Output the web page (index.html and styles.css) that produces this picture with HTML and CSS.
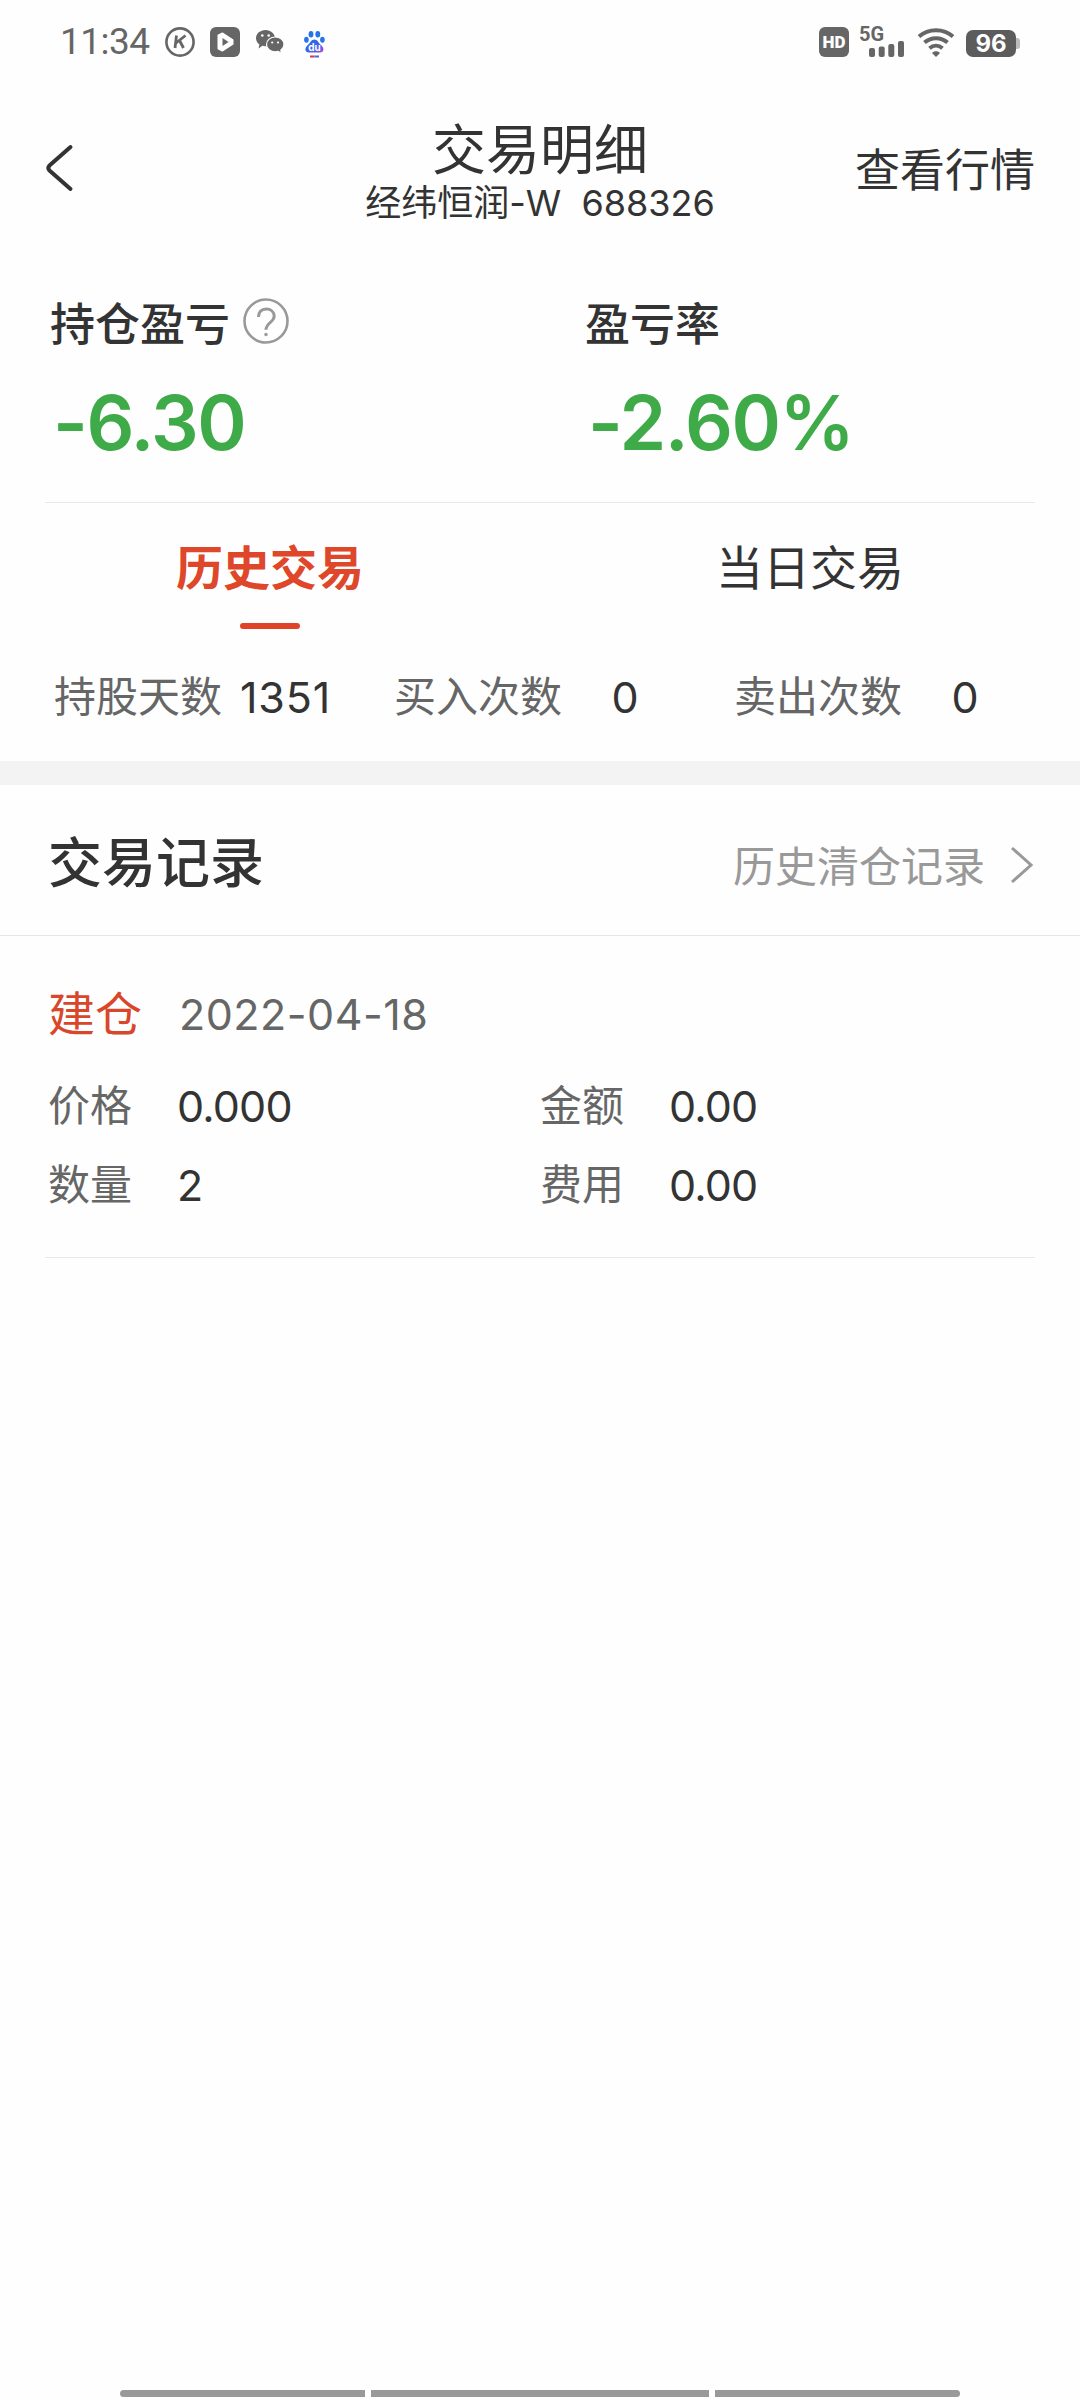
FILE: index.html
```
<!DOCTYPE html>
<html lang="zh-Hans">
<head>
  <meta charset="UTF-8">
  <meta name="viewport" content="width=1080, initial-scale=1.0">
  <title>交易明细</title>
  <link rel="stylesheet" href="styles.css">
</head>
<body>
  <div class="status-bar">
    <div class="status-left">
      <span class="time">11:34</span>
      <svg width="30" height="30" viewBox="0 0 30 30">
        <circle cx="15" cy="15" r="13.6" fill="none" stroke="#666" stroke-width="2.6"/>
        <path d="M11.500 8.500L10 21M20.500 8.500L11 16M14.500 13.500L18.500 21" fill="none" stroke="#666" stroke-width="2.800"/>
      </svg>
      <svg width="30" height="30" viewBox="0 0 30 30">
        <rect width="30" height="30" rx="6" fill="#666"/>
        <path d="M8.500 8.500L12.500 6.500L22.500 13V17L12.500 23.500L8.500 21.500Z" fill="#fff" stroke="#fff" stroke-width="2" stroke-linejoin="round"/>
        <path d="M12.500 11V19L18.500 15Z" fill="#666"/>
      </svg>
      <svg class="wechat" width="28" height="24" viewBox="0 0 28 24">
        <path d="M9.500 0C4.300 0 0 3.600 0 8.200c0 2.600 1.300 4.700 3.400 6.200L2.600 18.500l3.700-2.700c1 .3 2 .5 3.200.5 5.300 0 9.500-3.600 9.500-8.100S14.800 0 9.500 0z" fill="#666"/>
        <path d="M19.200 7c-4.800 0-8.700 3.300-8.700 7.400s3.900 7.500 8.700 7.500c1.100 0 2.100-.2 3.100-.5l3.200 2.100-.7-3.300c2-1.400 3.200-3.400 3.200-5.800 0-4.100-4-7.400-8.800-7.400z" fill="#666" stroke="#fff" stroke-width="1.200"/>
        <circle cx="6.300" cy="5.500" r="1.300" fill="#fff"/>
        <circle cx="12.700" cy="5.500" r="1.300" fill="#fff"/>
        <circle cx="16.200" cy="12.500" r="1.100" fill="#fff"/>
        <circle cx="22" cy="12.500" r="1.100" fill="#fff"/>
      </svg>
      <svg class="baidu" width="21" height="27" viewBox="0 0 21 27">
        <defs>
          <linearGradient id="paw" x1="0" y1="0" x2="1" y2="1">
            <stop offset="0" stop-color="#1f6fe8"/>
            <stop offset=".6" stop-color="#3f63ea"/>
            <stop offset="1" stop-color="#a24be0"/>
          </linearGradient>
        </defs>
        <ellipse cx="7" cy="3.300" rx="2.400" ry="3.300" fill="#2573e6"/>
        <ellipse cx="13.800" cy="3.300" rx="2.400" ry="3.300" fill="#2573e6"/>
        <ellipse cx="2.400" cy="8.700" rx="2.300" ry="3" fill="#2573e6"/>
        <ellipse cx="18.400" cy="8.700" rx="2.300" ry="3" fill="#2573e6"/>
        <path d="M10.400 8.500c3 0 4 3 6 5s3 3 3 5-1.500 3-3.500 3h-11c-2 0-3.500-1-3.500-3s1-3 3-5 3-5 6-5z" fill="url(#paw)"/>
        <text x="10.400" y="19.500" text-anchor="middle" class="du">du</text>
        <path d="M6 25.500h4.500" stroke="#d8383e" stroke-width="2"/>
        <path d="M10.500 25.500H15" stroke="#4a6fd0" stroke-width="2"/>
      </svg>
    </div>
    <div class="status-right">
      <span class="hd">HD</span>
      <div class="signal">
        <span class="net">5G</span>
        <svg width="36" height="16" viewBox="0 0 36 16" fill="#666">
          <rect x="0" y="7" width="6" height="9" rx="2"/>
          <rect x="9.700" y="5.500" width="6" height="10.500" rx="2"/>
          <rect x="19.300" y="3" width="6" height="13" rx="2"/>
          <rect x="29" y="0" width="6" height="16" rx="2"/>
        </svg>
      </div>
      <svg class="wifi" width="38" height="30" viewBox="0 0 38 30">
        <g fill="none" stroke="#666" stroke-width="4">
          <path d="M2 9.500C11.500 1 26.500 1 36 9.500"/>
          <path d="M7.500 15.500C14 9.700 24 9.700 30.500 15.500"/>
          <path d="M12.500 21.300C16.500 17.900 21.500 17.900 25.500 21.300"/>
        </g>
        <path d="M15 26C17 23.500 21 23.500 23 26L19 30Z" fill="#666"/>
      </svg>
      <span class="battery">96</span>
    </div>
  </div>

  <div class="header">
    <svg class="back" width="30" height="50" viewBox="0 0 30 50">
      <path d="M25.500 4L4.500 22.500Q2 25 4.500 27.500L25.500 46" fill="none" stroke="#333" stroke-width="4" stroke-linecap="round"/>
    </svg>
    <div class="title">
      <h1>交易明细</h1>
      <p>经纬恒润-W&nbsp; 688326</p>
    </div>
    <span class="quote">查看行情</span>
  </div>

  <div class="summary">
    <div class="summary-item">
      <div class="summary-label">持仓盈亏
        <svg width="46" height="46" viewBox="0 0 46 46" fill="none" stroke="#999">
          <circle cx="23" cy="23" r="21.500" stroke-width="2.600"/>
          <path d="M15.500 19c0-5 3-8 7.700-8s8 3 8 7.300c0 6-8.200 6.200-8.200 13.500" stroke-width="3"/>
          <circle cx="23" cy="36.500" r="1.700" fill="#999" stroke="none"/>
        </svg>
      </div>
      <div class="summary-value">-6.30</div>
    </div>
    <div class="summary-item">
      <div class="summary-label">盈亏率</div>
      <div class="summary-value">-2.60%</div>
    </div>
  </div>

  <div class="tabs">
    <div class="tab active">历史交易</div>
    <div class="tab">当日交易</div>
  </div>

  <div class="stats">
    <div class="stat"><span>持股天数</span><b>1351</b></div>
    <div class="stat"><span>买入次数</span><b>0</b></div>
    <div class="stat"><span>卖出次数</span><b>0</b></div>
  </div>

  <div class="section-header">
    <h2>交易记录</h2>
    <div class="more">历史清仓记录
      <svg width="24" height="40" viewBox="0 0 24 40">
        <path d="M2 3L21 20L2 37" fill="none" stroke="#999" stroke-width="3"/>
      </svg>
    </div>
  </div>

  <div class="record">
    <div class="record-head">
      <span class="type">建仓</span>
      <span class="date">2022-04-18</span>
    </div>
    <div class="record-grid">
      <div class="field"><span>价格</span><b>0.000</b></div>
      <div class="field"><span>金额</span><b>0.00</b></div>
      <div class="field"><span>数量</span><b>2</b></div>
      <div class="field"><span>费用</span><b>0.00</b></div>
    </div>
  </div>

  <div class="nav-bar">
    <i></i><i class="mid"></i><i></i>
  </div>
</body>
</html>
```
FILE: styles.css
```
* {
  box-sizing: border-box;
  margin: 0;
  padding: 0;
}
body {
  width: 1080px;
  height: 2400px;
  display: flex;
  flex-direction: column;
  background: #fefefe;
  color: #333;
  font-family: Inter, "Noto Sans CJK SC", sans-serif;
  line-height: 60px;
  overflow: hidden;
}
svg {
  display: block;
  flex: none;
}
b {
  font-weight: 400;
}

/* status bar */
.status-bar {
  height: 84px;
  padding: 0 61px 0 60px;
  display: flex;
  align-items: center;
  justify-content: space-between;
  color: #666;
}
.status-left,
.status-right {
  display: flex;
  align-items: center;
}
.status-left {
  gap: 15px;
}
.time {
  width: 90px;
  font-family: Roboto, sans-serif;
  font-size: 37px;
  letter-spacing: -0.5px;
}
.wechat {
  margin-left: 1px;
}
.baidu {
  margin: 4px 0 0 5px;
}
.du {
  font: bold 10px Inter, sans-serif;
  fill: #fff;
}
.hd {
  width: 30px;
  height: 30px;
  border-radius: 6px;
  background: #666;
  color: #fff;
  font: 900 17px/31px Roboto, sans-serif;
  text-align: center;
  margin-right: 11px;
}
.signal {
  width: 46px;
  height: 34px;
}
.signal svg {
  margin: -2px 0 0 9px;
}
.net {
  display: block;
  margin-left: -1px;
  font: bold 20px/18px Roboto, sans-serif;
}
.wifi {
  margin: 0 11px 0 11px;
}
.battery {
  position: relative;
  width: 50px;
  height: 27px;
  margin: 2px 3px 0 0;
  border-radius: 7px;
  background: #5c5c5c;
  color: #fff;
  font: bold 24px/27px Inter, sans-serif;
  text-align: center;
}
.battery::after {
  content: "";
  position: absolute;
  left: 50px;
  top: 8px;
  width: 4px;
  height: 11px;
  border-radius: 0 3px 3px 0;
  background: #bbb;
}

/* header */
.header {
  height: 176px;
  padding: 0 45px;
  display: grid;
  grid-template-columns: 1fr auto 1fr;
  align-items: center;
}
.back {
  margin-bottom: 9px;
}
.title {
  text-align: center;
}
.title h1 {
  font-size: 54px;
  font-weight: 400;
  line-height: 60px;
}
.title p {
  margin-top: 2px;
  font-size: 36px;
  line-height: 40px;
}
.quote {
  justify-self: end;
  padding-bottom: 2px;
  font-size: 45px;
}

/* profit summary */
.summary {
  height: 243px;
  margin: 0 45px;
  padding-top: 35px;
  display: grid;
  grid-template-columns: 535px 1fr;
  border-bottom: 1px solid #e9e9e9;
}
.summary-item {
  padding-left: 5px;
}
.summary-label {
  display: flex;
  align-items: center;
  gap: 13px;
  font-size: 45px;
  font-weight: 500;
}
.summary-label svg {
  margin-bottom: 8px;
}
.summary-value {
  margin: 28px 0 0 3px;
  font-size: 75px;
  font-weight: 600;
  line-height: 80px;
  letter-spacing: -1.5px;
  color: #3eaa48;
}

/* tabs */
.tabs {
  height: 126px;
  padding-top: 35px;
  display: grid;
  grid-template-columns: 1fr 1fr;
}
.tab {
  display: flex;
  flex-direction: column;
  align-items: center;
  gap: 25px;
  font-size: 47px;
}
.tab.active {
  color: #de472a;
  font-weight: 700;
}
.tab.active::after {
  content: "";
  width: 60px;
  height: 6px;
  border-radius: 3px;
  background: #e04428;
}

.stats {
  height: 132px;
  padding: 38px 45px 0 54px;
  display: grid;
  grid-template-columns: 340px 340px 1fr;
  font-size: 42px;
}
.stat {
  display: flex;
}
.stat span {
  width: 168px;
  color: #666;
}
.stat b {
  width: 127px;
  font-size: 43px;
  letter-spacing: 0.8px;
  text-align: center;
}

/* records */
.section-header {
  height: 175px;
  padding: 0 45px 0 48px;
  display: flex;
  align-items: center;
  justify-content: space-between;
  border-top: 24px solid #f3f3f3;
  border-bottom: 1px solid #e6e6e6;
}
.section-header h2 {
  padding-top: 7px;
  font-size: 54px;
  font-weight: 500;
}
.more {
  display: flex;
  align-items: center;
  gap: 25px;
  padding-top: 14px;
  font-size: 42px;
  color: #999;
}
.more svg {
  margin: 0 1px 5px 0;
}
.record {
  margin: 0 45px;
  padding: 48px 0 42px 3px;
  border-bottom: 1px solid #e9e9e9;
}
.record-head {
  display: flex;
  gap: 37px;
}
.type {
  font-size: 47px;
  color: #d9472b;
}
.date {
  font-size: 43px;
  letter-spacing: 0.5px;
  color: #666;
}
.record-grid {
  margin-top: 32px;
  display: grid;
  grid-template-columns: 492px 1fr;
  row-gap: 19px;
  font-size: 42px;
}
.field {
  display: flex;
}
.field span {
  width: 129px;
  color: #666;
}
.field b {
  font-size: 43px;
  letter-spacing: -0.8px;
}

.nav-bar {
  margin-top: auto;
  padding: 0 120px 3px;
  display: flex;
  gap: 6px;
}
.nav-bar i {
  width: 245px;
  height: 7px;
  border-radius: 4px 0 0 4px;
  background: #999;
}
.nav-bar i:last-child {
  border-radius: 0 4px 4px 0;
}
.nav-bar .mid {
  width: 338px;
  border-radius: 0;
}
```
